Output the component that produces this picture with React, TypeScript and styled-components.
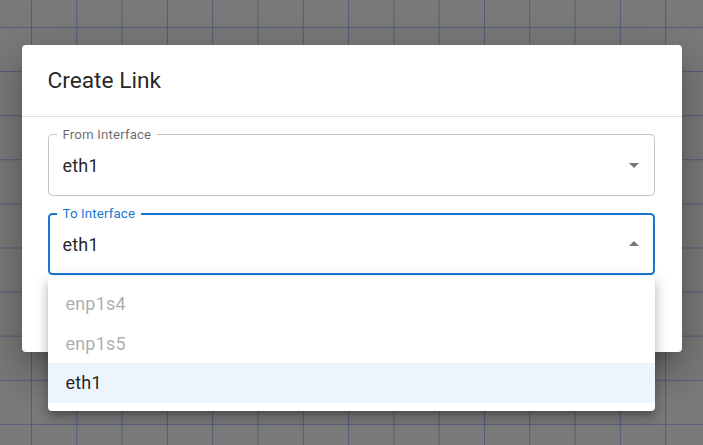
import React from "react";
import styled, { createGlobalStyle } from "styled-components";

const Global = createGlobalStyle`
  html, body { margin: 0; padding: 0; }
  body {
    font-family: Roboto, "Liberation Sans", Arial, sans-serif;
    overflow: hidden;
    -webkit-font-smoothing: antialiased;
  }
`;

const Canvas = styled.div`
  width: 703px;
  height: 445px;
  box-sizing: border-box;
  background-color: #7a7a7a;
  background-image:
    linear-gradient(to right, #515d78 1px, transparent 1px),
    linear-gradient(to bottom, #515d78 1px, transparent 1px);
  background-size: 45.3px 44.1px;
  background-position: 31px 27px;
  display: flex;
  flex-direction: column;
  align-items: center;
  padding-top: 45px;
`;

const Dialog = styled.div`
  width: 660px;
  background: #fff;
  border-radius: 4px;
  box-shadow: 0 11px 15px -7px rgba(0,0,0,0.2), 0 24px 38px 3px rgba(0,0,0,0.14), 0 9px 46px 8px rgba(0,0,0,0.12);
  display: flex;
  flex-direction: column;
`;

const Title = styled.h2`
  margin: 0;
  padding: 18px 27px 18px 26px;
  font-size: 22.7px;
  line-height: 35px;
  font-weight: 400;
  color: rgba(0, 0, 0, 0.87);
  border-bottom: 1px solid rgba(0, 0, 0, 0.12);
`;

const Content = styled.div`
  display: flex;
  flex-direction: column;
  gap: 10px;
  padding: 10px 27px 77px 26px;
`;

const FieldWrap = styled.div`
  position: relative;
`;

const Box = styled.fieldset<{ $focused?: boolean }>`
  margin: 0;
  min-width: 0;
  border-radius: 4.5px;
  border: ${(p) => (p.$focused ? "2px solid #1976d2" : "1px solid rgba(0,0,0,0.23)")};
  padding: ${(p) => (p.$focused ? "0 7px 0 7px" : "0 8px 0 8px")};
`;

const Legend = styled.legend<{ $focused?: boolean }>`
  padding: 0 6px;
  font-size: 13.3px;
  line-height: ${(p) => (p.$focused ? "16px" : "15px")};
  color: ${(p) => (p.$focused ? "#1976d2" : "rgba(0,0,0,0.6)")};
  letter-spacing: 0.01em;
`;

const Row = styled.div<{ $focused?: boolean }>`
  display: flex;
  align-items: center;
  height: ${(p) => (p.$focused ? "44px" : "46px")};
  padding: 0 0 7px 6px;
`;

const Value = styled.span`
  flex: 1;
  font-size: 18px;
  color: rgba(0, 0, 0, 0.87);
  letter-spacing: 0.01em;
`;

const Arrow = styled.svg`
  width: 24px;
  height: 24px;
  fill: rgba(0, 0, 0, 0.54);
  flex: none;
`;

const Menu = styled.ul`
  position: absolute;
  top: calc(100% + 1px);
  left: 0;
  right: 0;
  margin: 0;
  padding: 8px 0;
  list-style: none;
  background: #fff;
  border-radius: 4px;
  box-shadow: 0 5px 5px -3px rgba(0,0,0,0.2), 0 8px 10px 1px rgba(0,0,0,0.14), 0 3px 14px 2px rgba(0,0,0,0.12);
  z-index: 2;
`;

const Item = styled.li<{ $disabled?: boolean; $selected?: boolean }>`
  height: 39.5px;
  display: flex;
  align-items: center;
  padding: 0 18px;
  font-size: 18px;
  color: rgba(0, 0, 0, 0.87);
  letter-spacing: 0.01em;
  opacity: ${(p) => (p.$disabled ? 0.38 : 1)};
  background: ${(p) => (p.$selected ? "rgba(25,118,210,0.08)" : "transparent")};
`;

function SelectField({
  label,
  value,
  focused,
  children,
}: {
  label: string;
  value: string;
  focused?: boolean;
  children?: React.ReactNode;
}) {
  return (
    <FieldWrap>
      <Box $focused={focused}>
        <Legend $focused={focused}>{label}</Legend>
        <Row $focused={focused}>
          <Value>{value}</Value>
          <Arrow viewBox="0 0 24 24">
            {focused ? <path d="M7 14l5-5 5 5z" /> : <path d="M7 10l5 5 5-5z" />}
          </Arrow>
        </Row>
      </Box>
      {children}
    </FieldWrap>
  );
}

const options = [
  { name: "enp1s4", disabled: true },
  { name: "enp1s5", disabled: true },
  { name: "eth1", selected: true },
];

export default function App() {
  return (
    <>
      <Global />
      <Canvas>
        <Dialog>
          <Title>Create Link</Title>
          <Content>
            <SelectField label="From Interface" value="eth1" />
            <SelectField label="To Interface" value="eth1" focused>
              <Menu>
                {options.map((o) => (
                  <Item key={o.name} $disabled={o.disabled} $selected={o.selected}>
                    {o.name}
                  </Item>
                ))}
              </Menu>
            </SelectField>
          </Content>
        </Dialog>
      </Canvas>
    </>
  );
}
